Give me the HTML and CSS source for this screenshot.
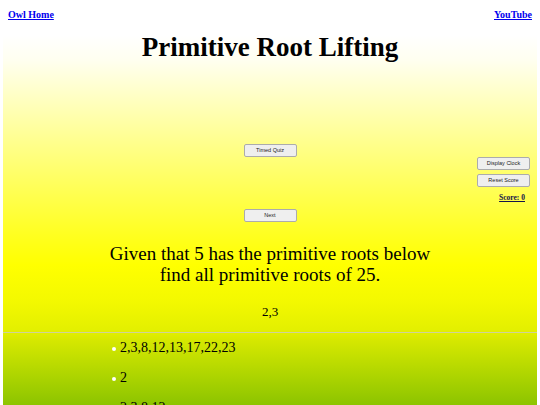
FILE: index.html
```html
<!DOCTYPE html>
<html lang="en">
<head>
<meta charset="utf-8">
<title>Primitive Root Lifting</title>
<link rel="stylesheet" href="styles.css">
</head>
<body>
<div class="page">
  <div class="topbar">
    <a class="navlink" href="#">Owl Home</a>
    <a class="navlink" href="#">YouTube</a>
  </div>
  <h1 class="title">Primitive Root Lifting</h1>
  <div class="controls">
    <div class="center-col">
      <button class="btn">Timed Quiz</button>
      <button class="btn">Next</button>
    </div>
    <div class="right-col">
      <button class="btn">Display Clock</button>
      <button class="btn">Reset Score</button>
      <a class="score" href="#">Score: 0</a>
    </div>
  </div>
  <p class="question">Given that 5 has the primitive roots below<br>find all primitive roots of 25.</p>
  <p class="given">2,3</p>
  <hr class="divider">
  <ul class="answers">
    <li>2,3,8,12,13,17,22,23</li>
    <li>2</li>
    <li>2,3,8,12</li>
  </ul>
</div>
</body>
</html>
```

FILE: styles.css
```css
html, body {
  margin: 0;
  padding: 0;
  background: #ffffff;
}

body {
  font-family: "Liberation Serif", "Times New Roman", serif;
  color: #000;
}

.page {
  margin: 0 3px;
  min-height: 405px;
  overflow: hidden;
  background: linear-gradient(to bottom,
    #ffffff 0px,
    #ffffff 35px,
    #fffff0 60px,
    #ffffc0 100px,
    #ffff90 140px,
    #ffff55 190px,
    #ffff20 235px,
    #ffff00 265px,
    #f4f900 300px,
    #e2ef00 332px,
    #d6e800 340px,
    #b4d800 370px,
    #8cc400 405px);
}

.topbar {
  display: flex;
  justify-content: space-between;
  padding: 9px 5px 0;
  line-height: 12px;
}

.navlink {
  font-size: 10px;
  font-weight: bold;
  color: #0000ee;
  text-decoration: underline;
}

.title {
  margin: 10px 0 0;
  font-size: 27px;
  line-height: 32px;
  font-weight: bold;
  text-align: center;
}

.controls {
  display: grid;
  grid-template-columns: 1fr auto 1fr;
  margin-top: 81px;
}

.center-col {
  grid-column: 2;
  display: flex;
  flex-direction: column;
  gap: 52px;
}

.right-col {
  grid-column: 3;
  justify-self: end;
  align-self: start;
  margin-top: 13px;
  padding-right: 7px;
  display: flex;
  flex-direction: column;
  align-items: flex-end;
  gap: 4px;
}

.btn {
  width: 53px;
  height: 13px;
  padding: 0;
  margin: 0;
  box-sizing: border-box;
  background: #efefef;
  border: 1px solid #acacac;
  border-radius: 2px;
  font-family: "Liberation Sans", Arial, sans-serif;
  font-size: 5.5px;
  line-height: 11px;
  color: #222;
}

.score {
  margin-top: 2px;
  margin-right: 5px;
  font-size: 7.5px;
  line-height: 10px;
  font-weight: bold;
  color: #14144a;
  text-decoration: underline;
}

.question {
  margin: 21px 0 0;
  font-size: 19px;
  line-height: 21px;
  text-align: center;
}

.given {
  margin: 19px 0 0;
  font-size: 13px;
  line-height: 16px;
  text-align: center;
}

.divider {
  margin: 12px 0 0;
  height: 0;
  border: 0;
  border-top: 1px solid #cfd29a;
}

.answers {
  list-style: none;
  margin: 7px 0 0;
  padding: 0 0 0 109px;
}

.answers li {
  font-size: 14px;
  line-height: 16px;
  margin-bottom: 14px;
}

.answers li::before {
  content: "";
  display: inline-block;
  width: 4px;
  height: 4px;
  border-radius: 50%;
  background: #ffffff;
  margin-right: 4px;
  vertical-align: 1px;
}
```
